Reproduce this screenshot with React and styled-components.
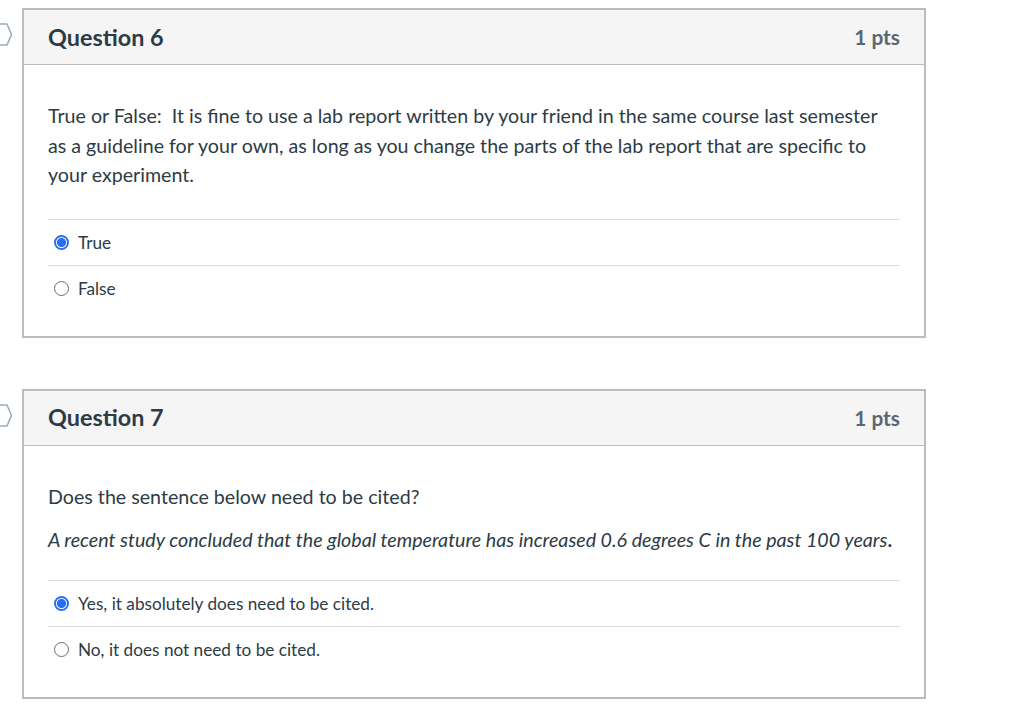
import React from "react";
import styled, { createGlobalStyle } from "styled-components";

const Global = createGlobalStyle`
  html, body { margin: 0; padding: 0; background: #fff; }
  body { font-family: Lato, "Open Sans", sans-serif; color: #2d3b45; }
`;

const Page = styled.div`
  display: flex;
  flex-direction: column;
  gap: 51px;
  padding-top: 8px;
  width: 926px;
`;

const Row = styled.div`
  display: flex;
  align-items: flex-start;
`;

const Gutter = styled.div`
  width: 22px;
  flex: none;
  padding-top: 14px;
  display: flex;
`;

const Card = styled.section`
  flex: 1;
  border: 2px solid #bcbcbc;
  background: #fff;
`;

const Header = styled.header`
  height: 55px;
  background: #f5f5f5;
  border-bottom: 1px solid #bcbcbc;
  display: flex;
  align-items: center;
  justify-content: space-between;
  padding: 0 24px 1px 24px;
  box-sizing: border-box;
`;

const Title = styled.h2`
  margin: 0;
  font-size: 23.4px;
  font-weight: 700;
  color: #2d3b45;
`;

const Points = styled.span`
  font-size: 20.8px;
  font-weight: 700;
  color: #5b6770;
`;

const Body = styled.div`
  padding: ${(p) => p.$top}px 24px 25px 24px;
`;

const Text = styled.div`
  font-size: 19.65px;
  line-height: 29.5px;
  margin-bottom: ${(p) => p.$after}px;
`;

const Para = styled.p`
  margin: 0 0 14px 0;
  &:last-child { margin-bottom: 0; }
  em strong { font-style: normal; }
`;

const Answers = styled.div`
  display: flex;
  flex-direction: column;
`;

const Answer = styled.label`
  display: flex;
  align-items: center;
  gap: 9px;
  height: 46px;
  border-top: 1px solid #dcdcdc;
  padding-left: 6px;
  font-size: 17.2px;
  color: #2d3b45;
  box-sizing: border-box;
`;

const Radio = styled.span`
  width: 15px;
  height: 15px;
  border-radius: 50%;
  box-sizing: border-box;
  flex: none;
  border: ${(p) => (p.$checked ? "2px solid #2b6ef0" : "1px solid #6b6b6b")};
  background: ${(p) => (p.$checked ? "radial-gradient(circle, #2b6ef0 0 4.2px, #fff 4.8px)" : "#fff")};
`;

const Flag = () => (
  <svg width="14" height="26" viewBox="0 0 14 26" style={{ overflow: "visible" }}>
    <path d="M-12 2 H7 L11.5 12.5 L7 23 H-12" fill="none" stroke="#9aacbc" strokeWidth="1.6" strokeLinejoin="round" />
  </svg>
);

const questions = [
  {
    title: "Question 6",
    top: 36,
    after: 29,
    text: [
      "True or False:\u00a0 It is fine to use a lab report written by your friend in the same course last semester as a guideline for your own, as long as you change the parts of the lab report that are specific to your experiment.",
    ],
    answers: [
      { label: "True", checked: true },
      { label: "False", checked: false },
    ],
  },
  {
    title: "Question 7",
    top: 36,
    after: 25,
    text: [
      "Does the sentence below need to be cited?",
      <em key="e">
        A recent study concluded that the global temperature has increased 0.6 degrees C in the past 100 years<strong>.</strong>
      </em>,
    ],
    answers: [
      { label: "Yes, it absolutely does need to be cited.", checked: true },
      { label: "No, it does not need to be cited.", checked: false },
    ],
  },
];

export default function App() {
  return (
    <>
      <Global />
      <Page>
        {questions.map((q) => (
          <Row key={q.title}>
            <Gutter>
              <Flag />
            </Gutter>
            <Card>
              <Header>
                <Title>{q.title}</Title>
                <Points>1 pts</Points>
              </Header>
              <Body $top={q.top}>
                <Text $after={q.after}>
                  {q.text.map((t, i) => (
                    <Para key={i}>{t}</Para>
                  ))}
                </Text>
                <Answers>
                  {q.answers.map((a) => (
                    <Answer key={a.label}>
                      <Radio $checked={a.checked} />
                      {a.label}
                    </Answer>
                  ))}
                </Answers>
              </Body>
            </Card>
          </Row>
        ))}
      </Page>
    </>
  );
}
